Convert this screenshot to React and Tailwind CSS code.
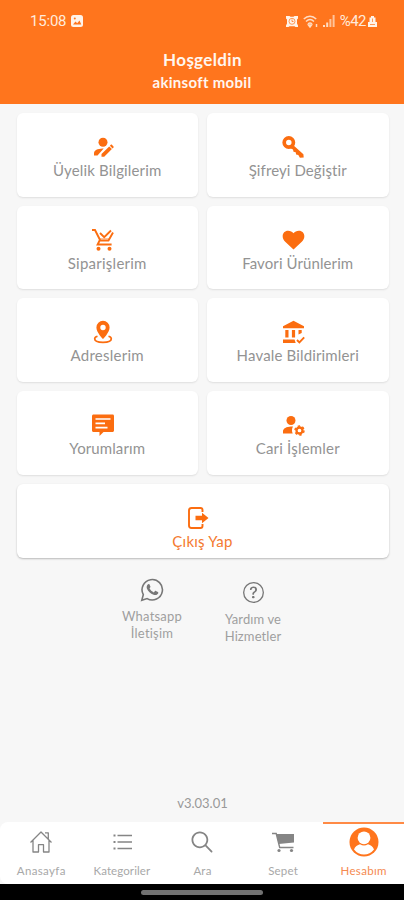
import { IoIosSearch } from "react-icons/io";
import { BsQuestionCircle } from "react-icons/bs";

const UserEditIcon = () => (
    <svg viewBox="0 0 24 24" className="h-6 w-6" fill="currentColor">
        <circle cx="12" cy="7.200" r="4.500" />
        <path d="M3 20.500v-2.400c0-2.700 3.600-4.400 8.500-4.600h1.200L6.500 20.500z" />
        <path d="M10.500 21.800v-2.700l7.700-7.700 2.700 2.700-7.700 7.700zM18.900 10.700l.9-.9c.3-.3.8-.3 1.100 0l1.600 1.600c.3.3.3.800 0 1.100l-.9.900z" />
    </svg>
);

const KeyIcon = () => (
    <svg viewBox="0 0 24 24" className="h-6 w-6" fill="none" stroke="currentColor">
        <circle cx="7.800" cy="7.500" r="4.600" strokeWidth="3.700" />
        <path d="m11.500 9.500 10.900 9.700.3 3.400-3.800.1-1.600-2.700-2.200-.4-.4-2.400-2.200-.4-.5-2.300-3-1.500z" fill="currentColor" stroke="none" />
    </svg>
);

const CartCheckIcon = () => (
    <svg viewBox="0 0 24 24" className="h-6 w-6" fill="none" stroke="currentColor" strokeWidth="1.900">
        <path d="M1 2h3l5.300 10.500h8.200L22 4.500M8.600 12.500 6.600 16.500h14" />
        <path d="m9 5 4.200 4.200L20 2.500" />
        <path d="M9 10.800h10" strokeWidth="1" opacity=".6" />
        <circle cx="7.500" cy="20.800" r="2" fill="currentColor" stroke="none" />
        <circle cx="18.500" cy="20.800" r="2" fill="currentColor" stroke="none" />
    </svg>
);

const HeartIcon = () => (
    <svg viewBox="0 0 24 24" className="h-6 w-6" fill="currentColor">
        <path d="M12.500 21.500 4.200 13.800C-.4 9.200 1.700 2.800 7.100 2.800c2.300 0 4.200.9 5.400 2.400 1.200-1.500 3.100-2.400 5.400-2.400 5.400 0 7.500 6.400 2.900 11z" />
    </svg>
);

const PinIcon = () => (
    <svg viewBox="0 0 24 24" className="h-6 w-6" fill="currentColor">
        <path
            fillRule="evenodd"
            d="M12 .8a6.600 6.600 0 0 0-6.600 6.600C5.400 12.300 12 19 12 19s6.600-6.700 6.600-11.600A6.600 6.600 0 0 0 12 .8zm0 4a2.700 2.700 0 1 1 0 5.400 2.700 2.700 0 0 1 0-5.400z"
        />
        <path
            d="M6.500 16.200c-2 .6-2.800 1.500-2.800 2.500 0 2.200 3.300 3.600 8.300 3.600s8.300-1.400 8.300-3.600c0-1-.8-1.900-2.800-2.500"
            fill="none"
            stroke="currentColor"
            strokeWidth="1.700"
        />
    </svg>
);

const BankCheckIcon = () => (
    <svg viewBox="0 0 24 24" className="h-6 w-6" fill="currentColor">
        <path d="M12.500.8 2 6.300v2h21v-2zM4.300 10h3.200v7.500H4.300zM10.900 10h3.200v7.500h-3.200zM17.500 10h3.200v3l-3.200 1.500zM2 19.500h11.500l1.200 3.500H2z" />
        <path d="m16 20 2.400 2.400 4.800-5" fill="none" stroke="currentColor" strokeWidth="1.900" />
    </svg>
);

const CommentIcon = () => (
    <svg viewBox="0 0 24 24" className="h-6 w-6">
        <path d="M2.500 1.500h19.200c.8 0 1.300.7 1.300 1.500v14.500c0 .8-.7 1.500-1.500 1.500h-9L8.500 23v-4h-6c-.8 0-1.500-.7-1.500-1.500V3c0-.8.7-1.500 1.500-1.500z" fill="currentColor" />
        <path d="M4.500 6h15M4.500 10.300h9.500M4.500 14.600h12" stroke="#fff" strokeWidth="1.700" />
    </svg>
);

const UserCogIcon = () => (
    <svg viewBox="0 0 24 24" className="h-6 w-6" fill="currentColor">
        <circle cx="10" cy="7.500" r="4.500" />
        <path d="M2 20.500v-2.200c0-2.800 3.500-4.600 8-4.800.9 0 1.200 0 2 .1-1.300 2-1.300 4.900-.3 6.900z" />
        <circle cx="18.500" cy="17.500" r="3" fill="none" stroke="currentColor" strokeWidth="2.300" />
        <circle cx="18.500" cy="17.500" r="4.500" fill="none" stroke="currentColor" strokeWidth="1.500" strokeDasharray="2.356" />
    </svg>
);

const ExitIcon = () => (
    <svg viewBox="0 0 24 24" className="h-6 w-6" fill="none" stroke="currentColor">
        <path d="M17.500 6V4c0-1.200-.8-2-2-2H6.500C5 2 4 3 4 4.500v15C4 21 5 22 6.500 22h9c1.200 0 2-.8 2-2v-2" strokeWidth="1.900" />
        <path d="M10.500 9.800h6.500V6.700l6.500 5.300-6.500 5.300v-3.100h-6.500z" fill="currentColor" stroke="none" />
    </svg>
);

const WhatsappIcon = () => (
    <svg viewBox="0 0 24 24" className="mb-[6px] h-6 w-6" fill="none" stroke="#777" strokeWidth="1.600">
        <path d="M1.800 22.200l1.500-5.500a10.200 10.200 0 1 1 3.800 3.900z" />
        <path
            d="M7.700 6.500c.5-.6 1.500-.7 1.800 0l.9 2c.2.500-.1.900-.9 1.800.9 1.900 2.300 3.200 4.300 4.100l1.200-1.300c.3-.3.600-.3.900-.2l2 1c.6.300.4 1.300 0 1.900-.9 1.300-2.500 1.500-4.300.9-3.200-1.100-5.600-3.400-6.700-6.200-.500-1.500-.100-3 .800-4z"
            fill="#777"
            stroke="none"
        />
    </svg>
);

const HomeIcon = () => (
    <svg viewBox="0 0 24 24" className="h-6 w-6" fill="none" stroke="currentColor" strokeWidth="1.300" strokeLinejoin="round">
        <path d="M1.500 12.500 12 2l10.500 10.500M4 10.500v11.500h5.500v-7.300h5v7.300H20V10.500M16 2.800h3.300v6.500" />
    </svg>
);

const ListIcon = () => (
    <svg viewBox="0 0 24 24" className="h-6 w-6" fill="none" stroke="currentColor" strokeWidth="1.500">
        <path d="M7.500 5.500H22M7.500 12H22M7.500 18.500H22" />
        <path d="M3.500 5.500h2M3.500 12h2M3.500 18.500h2" strokeWidth="2" />
    </svg>
);

const CartIcon = () => (
    <svg viewBox="0 0 24 24" className="h-6 w-6" fill="none" stroke="currentColor" strokeWidth="1.400">
        <path d="M1 3.500h4.200l3.500 14h13.800" />
        <path d="M5.500 4H23v8.500L7.600 14z" fill="currentColor" stroke="none" />
        <circle cx="8" cy="20.500" r="1.600" fill="currentColor" stroke="none" />
        <circle cx="20.500" cy="20.500" r="1.600" fill="currentColor" stroke="none" />
    </svg>
);

const ProfileIcon = () => (
    <svg viewBox="0 0 30 30" className="h-[30px] w-[30px]">
        <circle cx="15" cy="15" r="14.500" fill="currentColor" />
        <path d="M5 22.500c1-3 3.500-4.600 6-5.200a7.900 7.900 0 0 0 8 0c2.500.6 5 2.200 6 5.200a12.600 12.600 0 0 1-20 0z" fill="#fff" />
        <circle cx="15" cy="10.800" r="6.400" fill="#fff" />
    </svg>
);

const cards = [
    { label: "Üyelik Bilgilerim", icon: UserEditIcon, tracking: "tracking-[0.15px]" },
    { label: "Şifreyi Değiştir", icon: KeyIcon, tracking: "tracking-[0.1px]" },
    { label: "Siparişlerim", icon: CartCheckIcon, tracking: "tracking-[0.25px]" },
    { label: "Favori Ürünlerim", icon: HeartIcon, tracking: "tracking-[0.1px]" },
    { label: "Adreslerim", icon: PinIcon, tracking: "tracking-[0.25px]" },
    { label: "Havale Bildirimleri", icon: BankCheckIcon, tracking: "tracking-[0.15px]" },
    { label: "Yorumlarım", icon: CommentIcon, tracking: "tracking-[0.1px]" },
    { label: "Cari İşlemler", icon: UserCogIcon, tracking: "tracking-[0.2px]" },
];

const tabs = [
    { label: "Anasayfa", icon: <HomeIcon />, tracking: "tracking-[0.35px]" },
    { label: "Kategoriler", icon: <ListIcon />, tracking: "tracking-[0.1px]" },
    { label: "Ara", icon: <IoIosSearch className="h-7 w-7" />, tracking: "tracking-[0.2px]" },
    { label: "Sepet", icon: <CartIcon />, tracking: "tracking-[0.2px]" },
    { label: "Hesabım", icon: <ProfileIcon />, active: true, tracking: "tracking-[0.3px]" },
];

function StatusBar() {
    return (
        <div className="flex h-[42px] items-center justify-between pr-[27px] pl-[30px] font-[Roboto] text-[15px] text-[#ffeadb]">
            <div className="flex items-center gap-[5px]">
                <span className="tracking-[-0.2px]">15:08</span>
                <svg viewBox="0 0 12 12" className="h-3 w-3">
                    <rect width="12" height="12" rx="2.500" fill="#fff3e9" />
                    <path d="m2 9.500 2.500-3 1.700 1.700L8.500 5.500 10.300 9.500z" fill="#ff751d" />
                    <circle cx="3.800" cy="3.500" r="1" fill="#ff751d" />
                </svg>
            </div>
            <div className="flex items-center">
                <svg viewBox="0 0 12 12" className="mr-[5px] h-3 w-3">
                    <path d="M0 1h3.500l1 .7h3l1-.7H12v2.500l-1 1v4l1 2V12H9.500l-1-.7h-5l-1 .7H0v-1.500l1-2v-4l-1-1z" fill="#fff3e9" />
                    <circle cx="6" cy="6.300" r="3" fill="none" stroke="#ff751d" strokeWidth=".7" />
                    <path d="M6 4.500v2h1.500" fill="none" stroke="#ff751d" strokeWidth=".8" />
                </svg>
                <svg viewBox="0 0 16 13" className="mr-1 h-[13px] w-4" fill="none" stroke="#ffdcc2" strokeWidth="1.500">
                    <path d="M.8 4C4.500.3 9.500.3 13.200 4M3 6.500c2.400-2.300 5.600-2.300 8 0M5 9c1.200-1.100 2.800-1.100 4 0" />
                    <path d="m5.500 10 1.500 2 1.500-2zM13.500 9v3" />
                </svg>
                <svg viewBox="0 0 12 12" className="mr-[5px] h-3 w-3">
                    <path d="M0 10h2v2H0zM3.200 7.500h2V12h-2z" fill="#ffdcc2" />
                    <path d="M6.400 4h2v8h-2zM9.600 0h2v12h-2z" fill="#ffc49b" />
                </svg>
                <span className="tracking-[-0.5px]">%42</span>
                <svg viewBox="0 0 9 12" className="ml-[2px] h-3 w-[9px]" fill="#fff3e9">
                    <path d="M3 1h3v1.500h1.500V7H9v5H0V7h1.500V2.500H3z" />
                    <path d="M2 9.500h5M4.500 3.500V7" stroke="#ff9a58" />
                </svg>
            </div>
        </div>
    );
}

export default function App() {
    return (
        <div className="flex h-[900px] w-[404px] flex-col bg-[#f7f7f7] font-[Lato,sans-serif] text-[#939393] [font-variant-ligatures:none]">
            {/* Header */}
            <header className="h-[104px] bg-[#ff751d] text-center font-bold text-[#fff6ef]">
                <div className="font-normal">
                    <StatusBar />
                </div>
                <h1 className="mt-2 pl-px text-[17px] leading-5 tracking-[0.35px]">Hoşgeldin</h1>
                <p className="mt-[2px] text-[15px] leading-5 tracking-[0.3px]">akinsoft mobil</p>
            </header>

            {/* Account menu */}
            <main className="flex flex-1 flex-col pt-[9px] pr-[15.500px] pl-[16.500px]">
                <div className="grid grid-cols-2 gap-x-[9px] gap-y-[9px]">
                    {cards.map(({ label, icon: Icon, tracking }) => (
                        <button
                            key={label}
                            className="flex h-[83.700px] flex-col items-center rounded-md bg-white pt-[22px] shadow-[0_1px_2px_rgba(0,0,0,0.1)]"
                        >
                            <span className="mr-[9px] flex h-6 items-center text-[#fb6d10]">
                                <Icon />
                            </span>
                            <span className={`-mt-px text-[15px] leading-6 whitespace-nowrap ${tracking}`}>{label}</span>
                        </button>
                    ))}
                </div>
                <button className="mt-[9px] flex h-[74px] flex-col items-center rounded-md bg-white pt-[22px] text-[#f47a30] shadow-[0_1px_2px_rgba(0,0,0,0.25)]">
                    <span className="mr-[11px] flex h-6 items-center text-[#fb6d10]">
                        <ExitIcon />
                    </span>
                    <span className="-mt-px text-[15px] leading-6 tracking-[0.25px]">Çıkış Yap</span>
                </button>

                {/* Help links */}
                <div className="mt-5 flex justify-center text-center text-[13px] leading-[17px] text-[#9f9f9f]">
                    <div className="flex w-[101px] flex-col items-center tracking-[0.2px]">
                        <WhatsappIcon />
                        <span>Whatsapp</span>
                        <span>İletişim</span>
                    </div>
                    <div className="flex w-[101px] flex-col items-center pt-1 tracking-[0.1px]">
                        <BsQuestionCircle className="mb-2 h-[21px] w-[21px] text-[#777]" />
                        <span>Yardım ve</span>
                        <span>Hizmetler</span>
                    </div>
                </div>
                <p className="mt-auto mb-[9px] text-center text-[13px] leading-5 text-[#999]">v3.03.01</p>
            </main>

            {/* Bottom navigation */}
            <nav className="flex h-[62px] overflow-hidden rounded-l-lg bg-white pl-px">
                {tabs.map(({ label, icon, active, tracking }) => (
                    <button
                        key={label}
                        className={`flex flex-1 flex-col items-center border-t-2 pt-[3px] ${active ? "border-[#ff8a45] text-[#ff751d]" : "border-transparent text-[#858585]"
                            }`}
                    >
                        <span className="flex h-[30px] items-center">{icon}</span>
                        <span
                            className={`mt-[6px] text-[11.500px] leading-4 ${tracking} ${active ? "text-[#f58a50]" : "text-[#a8a8a8]"}`}
                        >
                            {label}
                        </span>
                    </button>
                ))}
            </nav>
            <div className="flex h-4 justify-center bg-black pt-[6px]">
                <div className="h-[5px] w-[122px] rounded-full bg-[#717171]" />
            </div>
        </div>
    );
}
